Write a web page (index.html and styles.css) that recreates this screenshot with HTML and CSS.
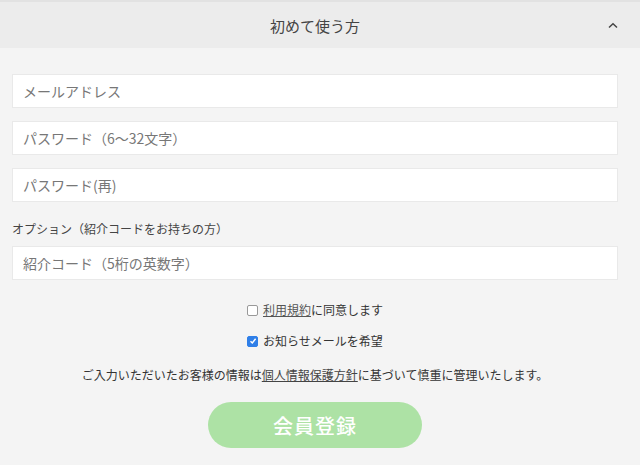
FILE: index.html
```html
<!DOCTYPE html>
<html lang="ja">
<head>
<meta charset="utf-8">
<link rel="stylesheet" href="styles.css">
</head>
<body>
<div class="panel">
  <div class="header">
    <span class="title">初めて使う方</span>
    <svg class="chevron" width="10" height="7" viewBox="0 0 10 7"><path d="M1 5.5 L5 1.8 L9 5.5" fill="none" stroke="#444" stroke-width="1.5"/></svg>
  </div>
  <div class="form">
    <div class="field">メールアドレス</div>
    <div class="field">パスワード（6〜32文字）</div>
    <div class="field">パスワード(再)</div>
    <div class="label">オプション（紹介コードをお持ちの方）</div>
    <div class="field">紹介コード（5桁の英数字）</div>
    <div class="checks">
      <label class="check"><span class="box"></span><span><u>利用規約</u>に同意します</span></label>
      <label class="check"><span class="box on"><svg width="8" height="8" viewBox="0 0 8 8"><path d="M1.5 4.2 L3.3 6 L6.6 1.8" fill="none" stroke="#fff" stroke-width="1.4"/></svg></span><span>お知らせメールを希望</span></label>
    </div>
    <p class="notice">ご入力いただいたお客様の情報は<u>個人情報保護方針</u>に基づいて慎重に管理いたします。</p>
    <div class="actions"><button class="submit">会員登録</button></div>
  </div>
</div>
</body>
</html>
```

FILE: styles.css
```css
html, body {
  margin: 0;
  padding: 0;
  background: #f4f4f4;
  font-family: "Noto Sans CJK JP", "Noto Sans", sans-serif;
  color: #333;
}
.panel {
  width: 640px;
}
.header {
  height: 46px;
  border-top: 2px solid #e2e2e2;
  background: #ececec;
  display: flex;
  align-items: center;
  justify-content: center;
  position: relative;
}
.title {
  font-size: 15px;
  color: #444;
  margin-left: -10px;
}
.chevron {
  position: absolute;
  right: 22px;
  top: 20px;
}
.form {
  padding: 26px 22px 0 12px;
  display: flex;
  flex-direction: column;
}
.field {
  height: 34px;
  box-sizing: border-box;
  background: #fff;
  border: 1px solid #e9e9e9;
  padding: 0 10px;
  display: flex;
  align-items: center;
  font-size: 14px;
  color: #777;
  margin-bottom: 13px;
}
.label {
  font-size: 12px;
  color: #444;
  margin: 5px 0 8px;
  line-height: 18px;
}
.checks {
  display: flex;
  flex-direction: column;
  align-items: center;
  gap: 13px;
  margin-top: 8px;
}
.check {
  display: flex;
  align-items: center;
  gap: 5px;
  font-size: 12px;
  color: #333;
  line-height: 18px;
}
.check u { color: #555; }
.box {
  width: 9px;
  height: 9px;
  border: 1px solid #999;
  border-radius: 2px;
  background: #fff;
  display: flex;
  align-items: center;
  justify-content: center;
}
.box.on {
  background: #2f7fe8;
  border-color: #2f7fe8;
}
.notice {
  margin: 16px 0 0;
  text-align: center;
  font-size: 12px;
  line-height: 18px;
  color: #333;
}
.notice u { color: #444; }
.actions {
  display: flex;
  justify-content: center;
  margin-top: 18px;
}
.submit {
  width: 214px;
  height: 46px;
  border: none;
  border-radius: 23px;
  background: #ade2a5;
  color: #fff;
  font-family: "Noto Sans CJK JP", sans-serif;
  font-size: 20px;
  font-weight: 500;
  letter-spacing: 1px;
}
```
